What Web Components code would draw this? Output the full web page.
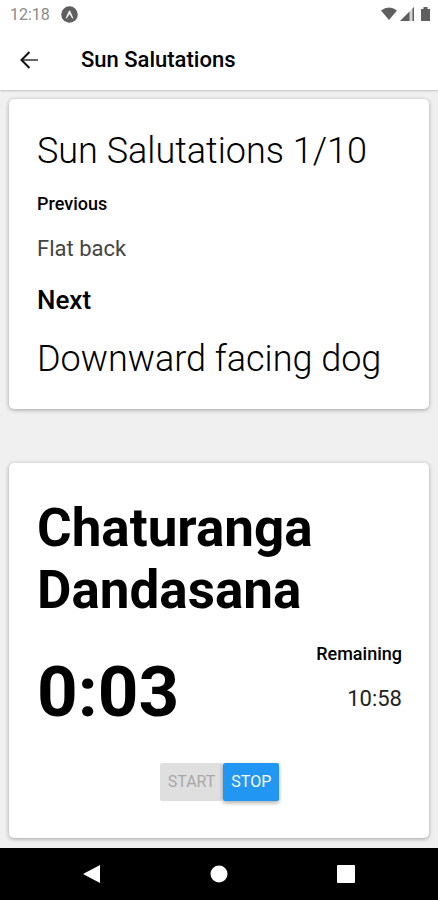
<!DOCTYPE html>
<html lang="en"><head><meta charset="utf-8"><meta name="viewport" content="width=device-width,initial-scale=1"><title>Sun Salutations</title>
<style>html,body{margin:0;height:100%}body{font-family:Roboto,"Noto Sans",sans-serif;color:#000;background:#f0f0f0}</style></head><body>
<yoga-app></yoga-app>
<script>
const define = (name, html) => customElements.define(name, class extends HTMLElement {
  constructor(){ super(); this.attachShadow({mode:"open"}).innerHTML = html; }
});
define("status-bar", `<style>
:host{display:flex;align-items:center;height:28px;padding:0 8px 0 10px;background:#fff;color:#8a8a8a;font-size:16px;box-sizing:border-box;position:relative;z-index:1}
.app{margin-left:11px}.right{margin-left:auto;display:flex;align-items:center;gap:3px}.battery{margin-left:4px}
svg{display:block}</style>
<span>12:18</span>
<svg class="app" width="17" height="17" viewBox="0 0 17 17"><circle cx="8.500" cy="8.500" r="8.300" fill="#5f5f5f"/><path d="M4.600 12.200 7.600 5.200Q8.500 3.600 9.400 5.200L12.400 12.200Q11.500 13 10.800 11.800L8.500 8.300 6.200 11.800Q5.500 13 4.600 12.200z" fill="#eee"/></svg>
<div class="right">
<svg width="16" height="14" viewBox="0 0 16 14"><path d="M0 3.500Q8-2.500 16 3.500L8 13z" fill="#5f5f5f"/></svg>
<svg width="14" height="14" viewBox="0 0 14 14"><path d="M0 14 14 0V14z" fill="#d4d4d4"/><path d="M0 14 9.500 4.500V14zM12.500 1.500 14 0V14H12.500z" fill="#5f5f5f"/></svg>
<svg class="battery" width="9" height="14" viewBox="0 0 9 14"><path d="M0 2h2.500V0h4v2H9v12H0z" fill="#5f5f5f"/></svg>
</div>`);
define("app-header", `<style>
:host{display:flex;align-items:center;height:62px;padding:1px 20px 0;background:#fff;box-shadow:0 1px 2px #0003;box-sizing:border-box}
button{display:flex;border:0;padding:0;background:none;margin-right:43px}
h1{margin:0;font-size:22px;font-weight:500;line-height:28px}</style>
<button aria-label="Back"><svg width="18" height="18" viewBox="0 0 18 18" fill="none" stroke-width="2"><path d="M18 9H2.500" stroke="#666"/><path d="M9.500 1 1.500 9l8 8" stroke="#111"/></svg></button>
<h1><slot></slot></h1>`);
define("paper-card", `<style>
:host{display:block;background:#fff;border-radius:5px;padding:28px 27px 26px 28px;box-shadow:0 1px 4px #0005}</style><slot></slot>`);
define("session-progress", `<style>
:host{display:flex;flex-direction:column;gap:17px}h2,h3,p{margin:0}
h2,.next{font-size:36px;line-height:48px;font-weight:350}
h3{font-size:18px;line-height:24px;font-weight:500}
.prev{font-size:22px;line-height:32px;font-weight:400;color:#444}
.big{font-size:26px;line-height:36px}
</style><h2>Sun Salutations 1/10</h2><h3>Previous</h3><p class="prev">Flat back</p><h3 class="big">Next</h3><p class="next">Downward facing dog</p>`);
define("pose-timer", `<style>
:host{display:block;padding:6px 0 11px}h2,h3,p{margin:0}
h2{font-size:53px;line-height:62px;font-weight:700}
.row{display:flex;justify-content:space-between;align-items:flex-start;margin-top:21px}
.time{font-size:71px;line-height:84px;font-weight:700;padding-top:8px}
.rest{text-align:right}h3{font-size:18px;line-height:24px;font-weight:500}
.rest p{font-size:22px;line-height:32px;font-weight:400;color:#222;margin-top:17px}
.actions{display:flex;justify-content:center;margin-top:29px}
button{font:400 16px/22px Roboto,sans-serif;border:0;border-radius:2px;padding:8px;background:#2196f3;color:#fff;box-shadow:0 2px 4px #0005}
button:disabled{background:#dfdfdf;color:#a8a8a8;box-shadow:none}
</style><h2>Chaturanga Dandasana</h2><div class="row"><p class="time">0:03</p><div class="rest"><h3>Remaining</h3><p>10:58</p></div></div>
<div class="actions"><button disabled>START</button><button>STOP</button></div>`);
define("nav-bar", `<style>
:host{display:flex;align-items:center;justify-content:space-around;height:52px;padding:0 29px;background:#000}
button{border:0;background:none;padding:0;display:flex}</style>
<button aria-label="Back"><svg width="20" height="20" viewBox="0 0 20 20"><path d="M18 1V19L1 10z" fill="#fff"/></svg></button>
<button aria-label="Home"><svg width="20" height="20" viewBox="0 0 20 20"><circle cx="10" cy="10" r="8.500" fill="#fff"/></svg></button>
<button aria-label="Overview"><svg width="20" height="20" viewBox="0 0 20 20"><rect x="1" y="1" width="18" height="18" rx="1" fill="#fff"/></svg></button>`);
define("yoga-app", `<style>
:host{display:flex;flex-direction:column;min-height:100%}
main{flex:1;display:flex;flex-direction:column;gap:54px;padding:9px}</style>
<status-bar></status-bar><app-header>Sun Salutations</app-header>
<main><paper-card><session-progress></session-progress></paper-card><paper-card><pose-timer></pose-timer></paper-card></main><nav-bar></nav-bar>`);
</script></body></html>
